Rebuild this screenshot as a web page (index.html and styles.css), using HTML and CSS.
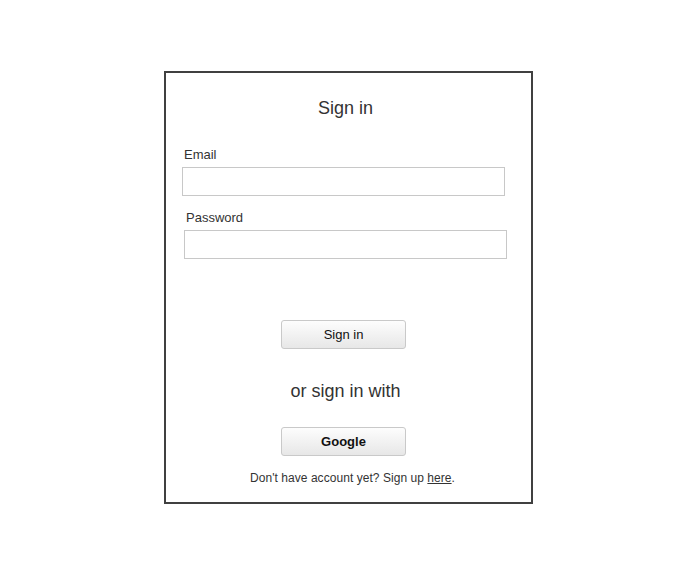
FILE: index.html
```html
<!DOCTYPE html>
<html>
<head>
<meta charset="utf-8">
<title>Sign in</title>
<link rel="stylesheet" href="styles.css">
</head>
<body>
<div class="card">
  <h1 class="title">Sign in</h1>
  <label class="label">Email</label>
  <input class="field" type="text">
  <label class="label label-pw">Password</label>
  <input class="field field-pw" type="password">
  <button class="btn btn-signin" type="button">Sign in</button>
  <div class="alt">or sign in with</div>
  <button class="btn btn-google" type="button">Google</button>
  <p class="footer">Don't have account yet? Sign up <a href="#" class="link">here</a>.</p>
</div>
</body>
</html>
```
FILE: styles.css
```css
html, body {
  margin: 0;
  padding: 0;
  background: #ffffff;
}
body {
  font-family: "Liberation Sans", Arial, sans-serif;
  color: #333333;
  padding-top: 71px;
  padding-left: 164px;
}
.card {
  box-sizing: border-box;
  width: 369px;
  height: 433px;
  border: 2px solid #404040;
  padding: 24px 26px 0 16px;
  display: flex;
  flex-direction: column;
  align-items: flex-start;
}
.title {
  margin: 0;
  align-self: stretch;
  text-align: center;
  font-size: 18px;
  line-height: 22px;
  font-weight: normal;
  color: #333333;
  padding-left: 4px;
}
.label {
  display: block;
  font-size: 13px;
  line-height: 16px;
  color: #333333;
  margin-top: 28px;
  margin-left: 2px;
}
.label-pw {
  margin-top: 14px;
  margin-left: 4px;
}
.field {
  box-sizing: border-box;
  width: 323px;
  height: 29px;
  margin: 4px 0 0 0;
  border: 1px solid #c8c8c8;
  background: #ffffff;
  padding: 0 4px;
  outline: none;
}
.field-pw {
  margin-left: 2px;
}
.btn {
  box-sizing: border-box;
  align-self: flex-start;
  margin-left: 99px;
  width: 125px;
  height: 29px;
  border: 1px solid #c9c9c9;
  border-radius: 3px;
  background: linear-gradient(to bottom, #fdfdfd 0%, #e7e7e7 100%);
  font-family: "Liberation Sans", Arial, sans-serif;
  font-size: 13px;
  color: #111111;
  padding: 0;
}
.btn-signin {
  margin-top: 61px;
}
.btn-google {
  margin-top: 25px;
  font-weight: bold;
}
.alt {
  align-self: stretch;
  text-align: center;
  font-size: 18px;
  line-height: 22px;
  margin-top: 31px;
  color: #333333;
  padding-left: 4px;
}
.footer {
  margin: 15px 0 0 0;
  align-self: stretch;
  text-align: center;
  font-size: 12px;
  line-height: 15px;
  color: #333333;
  padding-left: 18px;
  letter-spacing: 0.05px;
}
.link {
  color: #333333;
  text-decoration: underline;
}
```
